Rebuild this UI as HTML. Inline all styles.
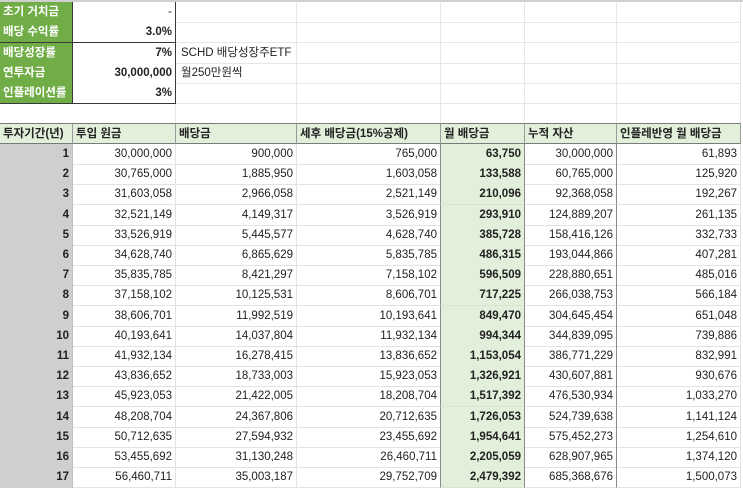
<!DOCTYPE html>
<html><head><meta charset="utf-8"><style>
body{margin:0;width:743px;height:488px;overflow:hidden;background:#fff;font-family:"Liberation Sans","Noto Sans CJK KR",sans-serif;font-size:11.5px;color:#222}
.c{position:absolute;box-sizing:border-box;white-space:nowrap;line-height:20px;padding:0 3px;overflow:hidden}
</style></head><body>
<div style="position:absolute;left:0;top:0;width:743px;height:2px;background:#d0d0d0"></div>
<div id="g"></div>
<script>
var h='';
function c(x,y,w,hh,txt,st){h+='<div class="c" style="left:'+x+'px;top:'+y+'px;width:'+w+'px;height:'+hh+'px;line-height:'+hh+'px;'+(st||'')+'">'+txt+'</div>';}
var X=[0,73,176,297,441,525,617,741];
for(var i=0;i<6;i++){var y=2+i*20.3;
 for(var k=1;k<7;k++) c(X[k],y,X[k+1]-X[k],21,'','border-right:1px solid #e6e6e6;border-bottom:1px solid #e6e6e6');}
var L=[['초기 거치금','-'],['배당 수익률','3.0%'],['배당성장률','7%'],['연투자금','30,000,000'],['인플레이션률','3%']];
for(var i=0;i<5;i++){var y=2+i*20.3;
 c(0,y,73,21,L[i][0],'background:#70ad47;color:#fff;font-weight:bold;border-bottom:1px solid #3a3a3a;border-right:1px solid #3a3a3a');
 c(73,y,103,21,L[i][1],'text-align:right;background:#fff;border-bottom:1px solid #3a3a3a;border-right:1px solid #3a3a3a;'+(i>0?'font-weight:bold':''));}
c(178,2+2*20.3,200,21,'SCHD 배당성장주ETF');
c(178,2+3*20.3,200,21,'월250만원씩');
var H=['투자기간(년)','투입 원금','배당금','세후 배당금(15%공제)','월 배당금','누적 자산','인플레반영 월 배당금'];
for(var k=0;k<7;k++) c(X[k],123,X[k+1]-X[k],21,H[k],'background:#e2efda;font-weight:bold;border-top:1px solid #7a7a7a;border-bottom:1px solid #7a7a7a;border-right:1px solid #9a9a9a');
var D=[
[1,'30,000,000','900,000','765,000','63,750','30,000,000','61,893'],
[2,'30,765,000','1,885,950','1,603,058','133,588','60,765,000','125,920'],
[3,'31,603,058','2,966,058','2,521,149','210,096','92,368,058','192,267'],
[4,'32,521,149','4,149,317','3,526,919','293,910','124,889,207','261,135'],
[5,'33,526,919','5,445,577','4,628,740','385,728','158,416,126','332,733'],
[6,'34,628,740','6,865,629','5,835,785','486,315','193,044,866','407,281'],
[7,'35,835,785','8,421,297','7,158,102','596,509','228,880,651','485,016'],
[8,'37,158,102','10,125,531','8,606,701','717,225','266,038,753','566,184'],
[9,'38,606,701','11,992,519','10,193,641','849,470','304,645,454','651,048'],
[10,'40,193,641','14,037,804','11,932,134','994,344','344,839,095','739,886'],
[11,'41,932,134','16,278,415','13,836,652','1,153,054','386,771,229','832,991'],
[12,'43,836,652','18,733,003','15,923,053','1,326,921','430,607,881','930,676'],
[13,'45,923,053','21,422,005','18,208,704','1,517,392','476,530,934','1,033,270'],
[14,'48,208,704','24,367,806','20,712,635','1,726,053','524,739,638','1,141,124'],
[15,'50,712,635','27,594,932','23,455,692','1,954,641','575,452,273','1,254,610'],
[16,'53,455,692','31,130,248','26,460,711','2,205,059','628,907,965','1,374,120'],
[17,'56,460,711','35,003,187','29,752,709','2,479,392','685,368,676','1,500,073']];
for(var i=0;i<17;i++){var y=144+i*20.2;
 for(var k=0;k<7;k++){var st='text-align:right;border-bottom:1px solid #e2e2e2;border-right:1px solid '+((k==3||k==4||k==5)?'#8a8a8a':'#e2e2e2')+';';
  if(k==0)st+='background:#d0cece;font-weight:bold;border-right:1px solid #c0c0c0;border-bottom:none;';
  if(k==4)st+='background:#e2efda;font-weight:bold;border-bottom:1px solid #d6e3ce;';
  c(X[k],y,X[k+1]-X[k],21,D[i][k],st);}}
document.getElementById('g').innerHTML=h;
</script>
</body></html>
